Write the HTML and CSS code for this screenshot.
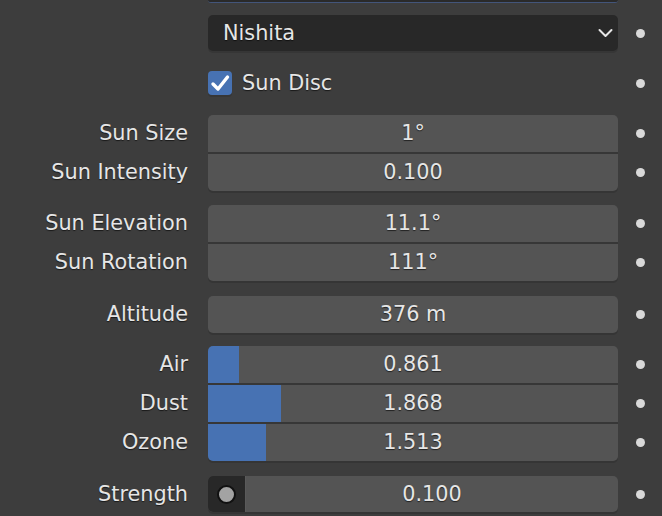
FILE: index.html
```html
<!DOCTYPE html>
<html>
<head>
<meta charset="utf-8">
<link rel="stylesheet" href="styles.css">
</head>
<body>
<div class="panel">
  <div class="row stub-row">
    <div></div>
    <div class="stub"></div>
    <div></div>
  </div>

  <div class="row dropdown-row">
    <div></div>
    <div class="dropdown">
      <span>Nishita</span>
      <svg class="chev" width="15" height="10" viewBox="0 0 15 10"><polyline points="1.5,2 7.5,8 13.5,2" fill="none" stroke="#e6e6e6" stroke-width="2" stroke-linecap="round" stroke-linejoin="round"/></svg>
    </div>
    <div class="dot-cell"><span class="dot"></span></div>
  </div>

  <div class="row check-row">
    <div></div>
    <div class="check">
      <span class="box">
        <svg width="24" height="24" viewBox="0 0 24 24"><polyline points="5,13 10,18 19.5,6" fill="none" stroke="#fff" stroke-width="3.4" stroke-linecap="round" stroke-linejoin="round"/></svg>
      </span>
      <span class="check-label">Sun Disc</span>
    </div>
    <div class="dot-cell"><span class="dot"></span></div>
  </div>

  <div class="group g1">
    <div class="row field-row">
      <div class="label">Sun Size</div>
      <div class="field">1°</div>
      <div class="dot-cell"><span class="dot"></span></div>
    </div>
    <div class="row field-row">
      <div class="label">Sun Intensity</div>
      <div class="field">0.100</div>
      <div class="dot-cell"><span class="dot"></span></div>
    </div>
  </div>

  <div class="group g2">
    <div class="row field-row">
      <div class="label">Sun Elevation</div>
      <div class="field">11.1°</div>
      <div class="dot-cell"><span class="dot"></span></div>
    </div>
    <div class="row field-row">
      <div class="label">Sun Rotation</div>
      <div class="field">111°</div>
      <div class="dot-cell"><span class="dot"></span></div>
    </div>
  </div>

  <div class="group g3">
    <div class="row field-row">
      <div class="label">Altitude</div>
      <div class="field">376 m</div>
      <div class="dot-cell"><span class="dot"></span></div>
    </div>
  </div>

  <div class="group g4">
    <div class="row field-row">
      <div class="label">Air</div>
      <div class="field bar" style="--fill: 31px">0.861</div>
      <div class="dot-cell"><span class="dot"></span></div>
    </div>
    <div class="row field-row">
      <div class="label">Dust</div>
      <div class="field bar" style="--fill: 73px">1.868</div>
      <div class="dot-cell"><span class="dot"></span></div>
    </div>
    <div class="row field-row">
      <div class="label">Ozone</div>
      <div class="field bar" style="--fill: 58px">1.513</div>
      <div class="dot-cell"><span class="dot"></span></div>
    </div>
  </div>

  <div class="group g5">
    <div class="row field-row">
      <div class="label">Strength</div>
      <div class="field socket-field">
        <span class="socket"><span class="circle"></span></span>
        <span class="socket-value">0.100</span>
      </div>
      <div class="dot-cell"><span class="dot"></span></div>
    </div>
  </div>
</div>
</body>
</html>
```

FILE: styles.css
```css
html, body {
  margin: 0;
  padding: 0;
  background: #3d3d3d;
}

body {
  width: 662px;
  height: 516px;
  overflow: hidden;
  font-family: "DejaVu Sans", sans-serif;
  font-size: 20.8px;
  color: #e6e6e6;
}

.panel {
  display: flex;
  flex-direction: column;
}

.row {
  display: grid;
  grid-template-columns: 188px 430px 44px;
  align-items: center;
}

.row > :nth-child(2) {
  margin-left: 20px;
  width: 410px;
}

.stub-row {
  height: 3px;
  align-items: stretch;
}

.stub {
  height: 3px;
  background: #2a2a2a;
  border-bottom: 1px solid #43557a;
  box-sizing: border-box;
  border-radius: 0 0 4px 4px;
}

.dropdown-row {
  margin-top: 12px;
}

.dropdown {
  height: 36px;
  box-sizing: border-box;
  background: #282828;
  border-radius: 5px;
  box-shadow: 0 2px 0 #363636;
  display: flex;
  align-items: center;
  justify-content: space-between;
  padding: 0 5px 0 15px;
  text-shadow: 0 1px 1px rgba(0,0,0,0.6);
}

.chev {
  display: block;
}

.check-row {
  margin-top: 20px;
  height: 24px;
}

.check {
  display: flex;
  align-items: center;
  gap: 10px;
  height: 24px;
}

.box {
  width: 24px;
  height: 24px;
  border-radius: 4px;
  background: #4772b3;
  box-shadow: 0 2px 0 #363636;
  display: block;
}

.box svg {
  display: block;
}

.check-label {
  text-shadow: 0 1px 1px rgba(0,0,0,0.6);
}

.dot-cell {
  display: flex;
  justify-content: center;
  align-items: center;
}

.dot {
  width: 9px;
  height: 9px;
  border-radius: 50%;
  background: #d9d9d9;
  display: block;
}

.group {
  display: flex;
  flex-direction: column;
}

.g1 { margin-top: 20px; }
.g2 { margin-top: 14px; }
.g3 { margin-top: 15px; }
.g4 { margin-top: 13px; }
.g5 { margin-top: 15px; }

.label {
  text-align: right;
  white-space: nowrap;
  text-shadow: 0 1px 1px rgba(0,0,0,0.6);
}

.field-row {
  height: 39px;
  align-items: start;
}

.field-row .label,
.field-row .dot-cell {
  height: 37px;
  line-height: 36px;
}

.field {
  height: 37px;
  line-height: 36px;
  background: #545454;
  text-align: center;
  text-shadow: 0 1px 1px rgba(0,0,0,0.6);
  border-bottom: 2px solid #373737;
  box-sizing: content-box;
}

.field-row:last-child {
  height: 37px;
}

.field-row:last-child .field {
  border-bottom: none;
  box-shadow: 0 2px 0 #353535;
  border-radius: 0 0 5px 5px;
}

.field-row:first-child .field {
  border-top-left-radius: 5px;
  border-top-right-radius: 5px;
}

.bar {
  background: linear-gradient(to right, #4772b3 var(--fill), #545454 var(--fill));
}

.socket-field {
  display: flex;
  padding: 0;
  overflow: hidden;
}

.g5 .field-row,
.g5 .field-row .label,
.g5 .field-row .dot-cell,
.g5 .field {
  height: 36px;
  line-height: 36px;
}

.socket {
  width: 37px;
  height: 36px;
  background: #282828;
  border-right: 1px solid #5a5a5a;
  display: flex;
  align-items: center;
  justify-content: center;
  flex: none;
}

.circle {
  width: 15px;
  height: 15px;
  border-radius: 50%;
  background: #a3a3a3;
  border: 2px solid #111;
  display: block;
}

.socket-value {
  flex: 1;
  text-align: center;
}
```
